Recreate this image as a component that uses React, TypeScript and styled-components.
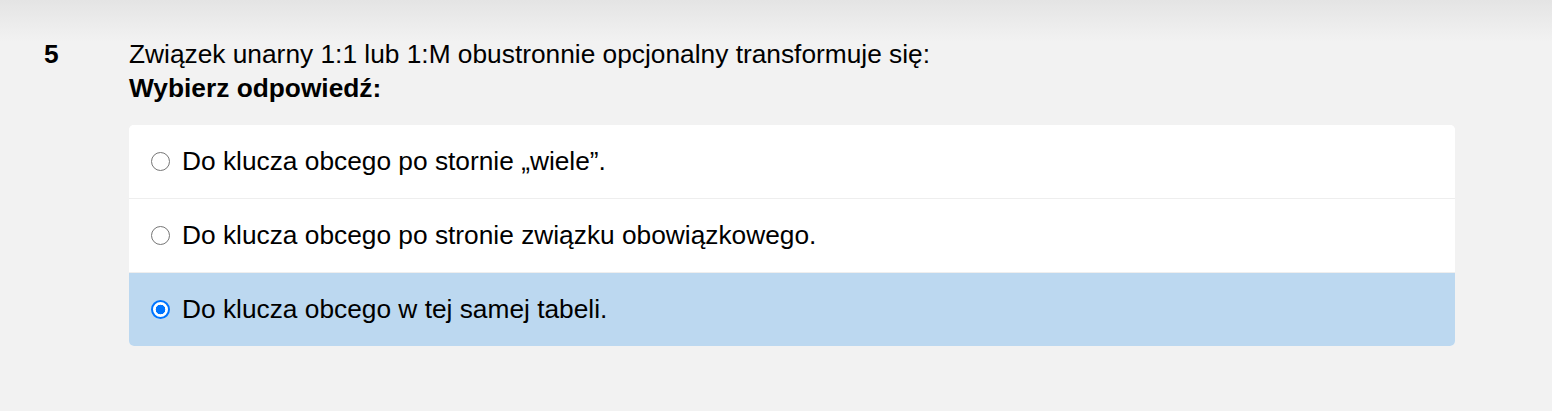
import React from "react";
import styled, { createGlobalStyle } from "styled-components";

const GlobalStyle = createGlobalStyle`
  html, body {
    margin: 0;
    padding: 0;
  }
  body {
    background: linear-gradient(to bottom, #e4e4e4 0px, #f2f2f2 42px, #f2f2f2 100%);
    min-height: 411px;
    font-family: "Liberation Sans", Arial, sans-serif;
    color: #000;
  }
`;

const Page = styled.div`
  display: grid;
  grid-template-columns: 129px 1326px;
  padding-top: 37px;
`;

const Number = styled.div`
  font-size: 26.3px;
  line-height: 34px;
  font-weight: 700;
  padding-left: 44px;
`;

const Body = styled.div`
  display: flex;
  flex-direction: column;
`;

const QuestionText = styled.div`
  font-size: 26.3px;
  line-height: 34px;
`;

const Prompt = styled.div`
  font-size: 26.3px;
  line-height: 34px;
  font-weight: 700;
  margin-bottom: 20px;
`;

const Answers = styled.div`
  display: flex;
  flex-direction: column;
  background: #fff;
  border-radius: 5px;
  overflow: hidden;
`;

const Answer = styled.label<{ $selected?: boolean; $first?: boolean }>`
  display: flex;
  align-items: center;
  gap: 12px;
  height: 73px;
  padding: 0 22px;
  font-size: 26.3px;
  background: ${(p) => (p.$selected ? "#bcd8f0" : "#fff")};
  border-top: ${(p) => (p.$first ? "none" : "1px solid #eeeeee")};
`;

const Radio = styled.input`
  appearance: none;
  -webkit-appearance: none;
  box-sizing: border-box;
  width: 19px;
  height: 19px;
  margin: 0;
  flex: none;
  border-radius: 50%;
  border: 1.6px solid #767676;
  background: #fff;

  &:checked {
    border: 2.6px solid #0075ff;
    background: radial-gradient(circle, #0075ff 0 4.6px, #fff 5.1px);
  }
`;

const options = [
  "Do klucza obcego po stornie „wiele”.",
  "Do klucza obcego po stronie związku obowiązkowego.",
  "Do klucza obcego w tej samej tabeli.",
];

export default function App() {
  return (
    <>
      <GlobalStyle />
      <Page>
        <Number>5</Number>
        <Body>
          <QuestionText>
            Związek unarny 1:1 lub 1:M obustronnie opcjonalny transformuje się:
          </QuestionText>
          <Prompt>Wybierz odpowiedź:</Prompt>
          <Answers>
            {options.map((o, i) => (
              <Answer key={i} $selected={i === 2} $first={i === 0}>
                <Radio type="radio" name="q5" defaultChecked={i === 2} />
                <span>{o}</span>
              </Answer>
            ))}
          </Answers>
        </Body>
      </Page>
    </>
  );
}
